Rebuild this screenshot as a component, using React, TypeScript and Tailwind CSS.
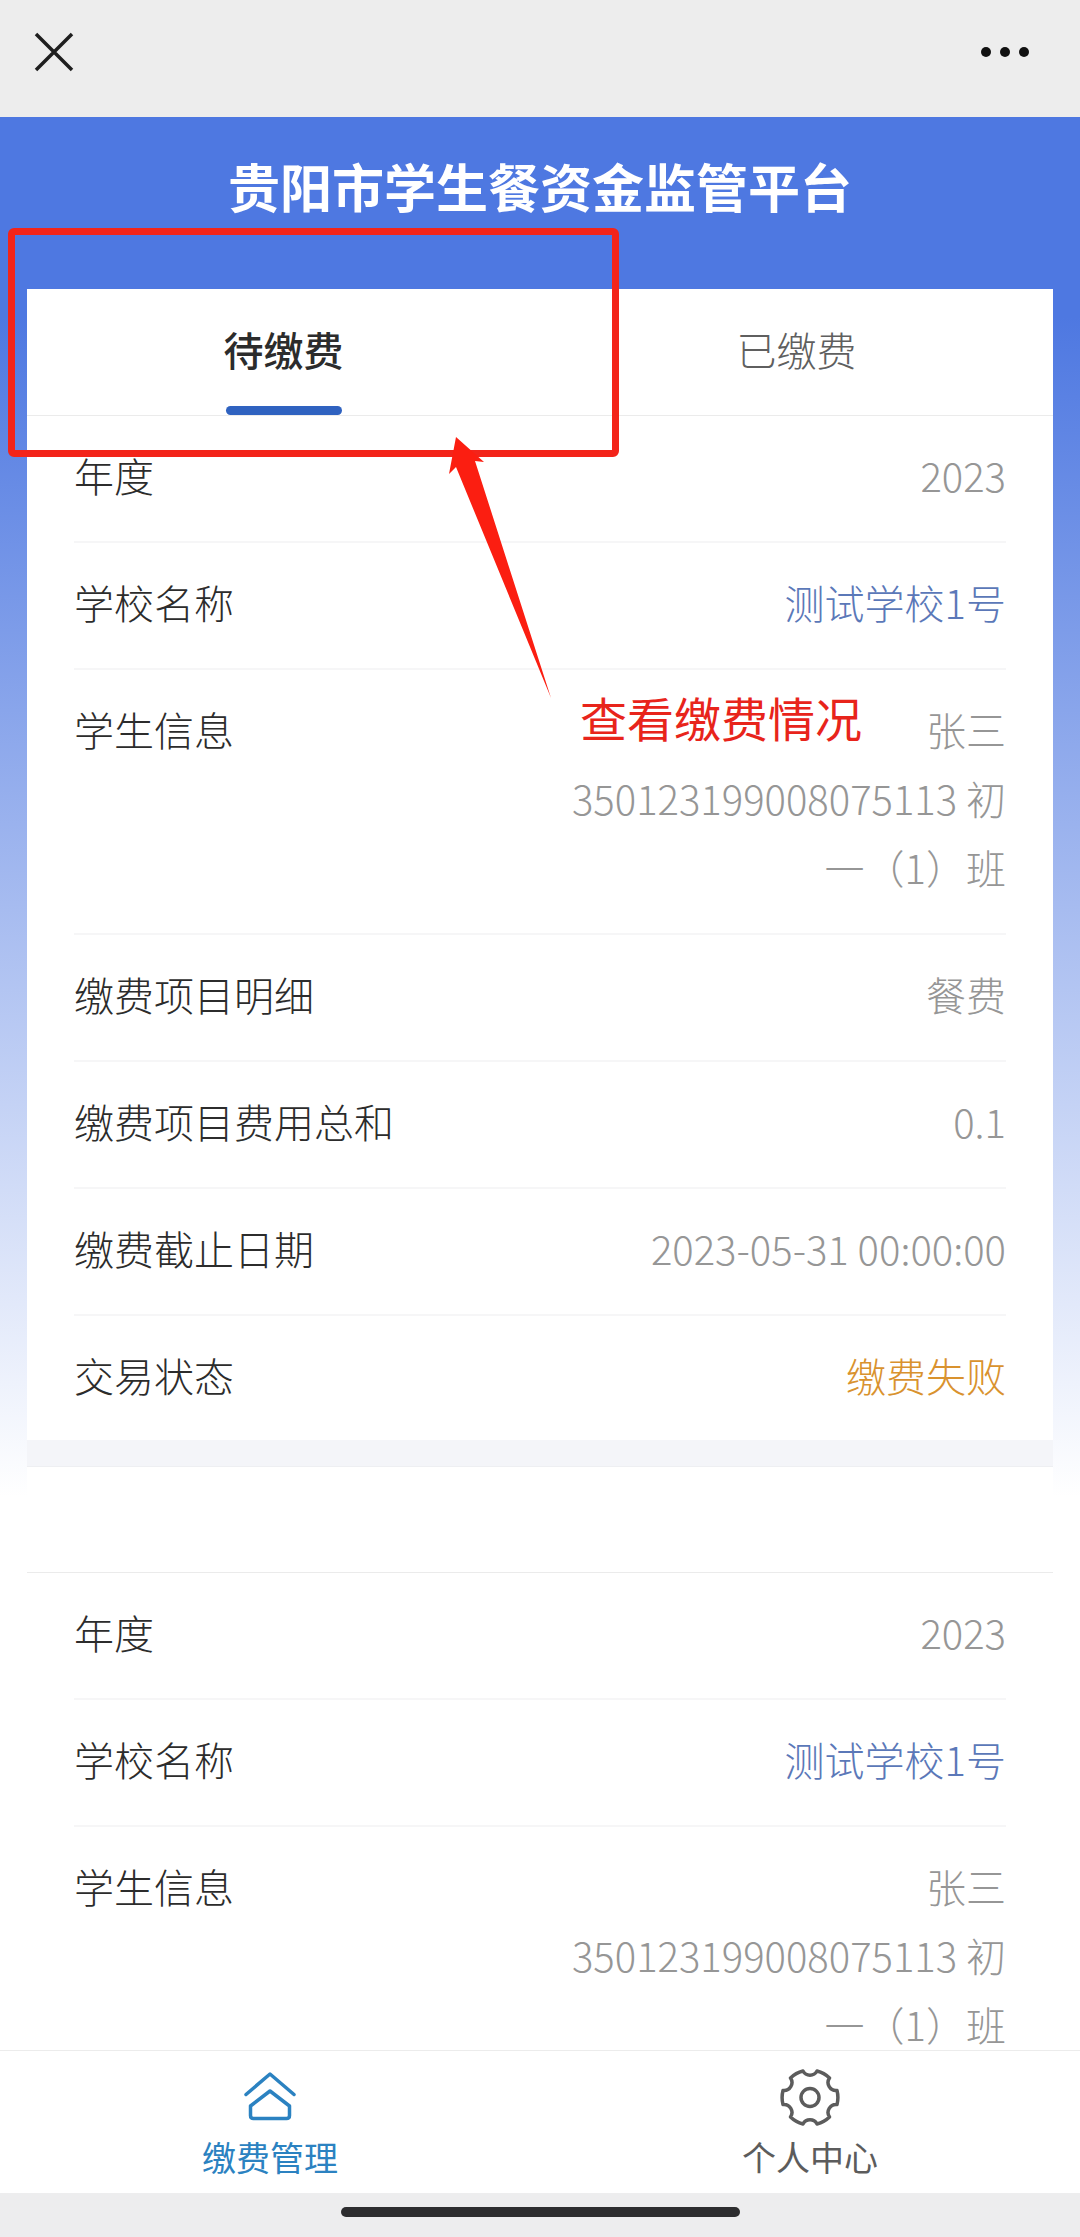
import React, { useState } from "react";

type Field = {
  label: string;
  value: string;
  href?: string;
  color?: string;
};

const tabs = ["待缴费", "已缴费"];

const firstBill: Field[] = [
  { label: "年度", value: "2023" },
  { label: "学校名称", value: "测试学校1号", href: "#school" },
  { label: "学生信息", value: "张三 350123199008075113 初一（1）班" },
  { label: "缴费项目明细", value: "餐费" },
  { label: "缴费项目费用总和", value: "0.1" },
  { label: "缴费截止日期", value: "2023-05-31 00:00:00" },
  { label: "交易状态", value: "缴费失败", color: "text-[#d9922e]" },
];

const secondBill: Field[] = firstBill.slice(0, 3);

const BillFields = ({ fields }: { fields: Field[] }) => {
  return (
    <dl className="px-[47px] text-[40px] leading-[69px] font-light">
      {fields.map((field) => (
        <div
          key={field.label}
          className="flex justify-between pt-[25px] pb-[31px] border-b-2 border-[#f6f6f7] last:border-b-0 last:pb-[30px]"
        >
          <dt className="text-[#2c2c2c]">{field.label}</dt>
          <dd className={`w-1/2 text-right ${field.color ?? "text-[#969696]"}`}>
            {field.href ? (
              <a href={field.href} className="text-[#5b78b8]">
                {field.value}
              </a>
            ) : (
              field.value
            )}
          </dd>
        </div>
      ))}
    </dl>
  );
};

const HomeIcon = () => (
  <svg
    className="w-[60px] h-[60px]"
    viewBox="0 0 60 60"
    fill="none"
    stroke="currentColor"
    strokeWidth="3.5"
    strokeLinecap="round"
    strokeLinejoin="round"
    aria-hidden="true"
  >
    <path d="M6 27.500 30 7 54 27.500" />
    <path d="M30 24 49.500 39V48.500q0 3-3 3h-33q-3 0-3-3v-9.500Z" />
  </svg>
);

const GearIcon = () => (
  <svg
    className="w-[60px] h-[60px]"
    viewBox="0 0 60 60"
    fill="none"
    stroke="currentColor"
    strokeWidth="3.5"
    strokeLinejoin="round"
    aria-hidden="true"
  >
    <path d="M23 4A8 8 0 0 0 37 4A28 28 0 0 1 49.500 11A8 8 0 0 0 57 23.500A28 28 0 0 1 57 37.500A8 8 0 0 0 49.500 50A28 28 0 0 1 37 57A8 8 0 0 0 23 57A28 28 0 0 1 10.500 50A8 8 0 0 0 3 37.500A28 28 0 0 1 3 23.500A8 8 0 0 0 10.500 11A28 28 0 0 1 23 4Z" />
    <circle cx="30" cy="30.500" r="9" />
  </svg>
);

// Red hint drawn over the page: frame, arrow and caption
const Guide = () => (
  <div className="pointer-events-none">
    <div className="absolute left-2 top-[111px] w-[611px] h-[229px] border-[7px] border-[#f3241a] rounded-md" />
    <svg
      className="absolute left-[448px] top-[319px] w-[104px] h-[264px]"
      viewBox="0 0 104 264"
      aria-hidden="true"
    >
      <path d="M8 1 36 26 27 25 103 262 8 31 1 38Z" fill="#fb1e11" />
    </svg>
    <p className="absolute left-[580px] top-[576px] text-[47px] leading-[48px] text-[#e8241b] whitespace-nowrap">
      查看缴费情况
    </p>
  </div>
);

const App = () => {
  const [active, setActive] = useState(0);

  return (
    <div className="flex flex-col h-screen bg-white font-['Noto_Sans_CJK_SC',sans-serif]">
      {/* Browser bar */}
      <header className="flex items-center justify-between shrink-0 h-[117px] pl-[34px] pr-[51px] pb-[13px] bg-[#ededed] text-[#1f1f1f]">
        <button aria-label="关闭">
          <svg className="w-10 h-10" viewBox="0 0 40 40" fill="none" stroke="currentColor" strokeWidth="3.5">
            <path d="M2 2 38 38M38 2 2 38" />
          </svg>
        </button>
        <button aria-label="更多" className="flex gap-[9px]">
          <span className="w-[10px] h-[10px] rounded-full bg-[#111]" />
          <span className="w-[10px] h-[10px] rounded-full bg-[#111]" />
          <span className="w-[10px] h-[10px] rounded-full bg-[#111]" />
        </button>
      </header>

      {/* Page content */}
      <main className="flex-1 min-h-0 overflow-y-auto [scrollbar-width:none]">
        <div className="relative px-[27px] bg-[linear-gradient(to_bottom,#4e78e1_0,#4e78e1_200px,#fff_1380px)]">
          <h1 className="pt-[33px] pb-[67px] text-center text-[52px] leading-[72px] font-bold text-white">
            贵阳市学生餐资金监管平台
          </h1>

          <section className="bg-white">
            <div role="tablist" className="flex h-[127px] border-b border-[#ebebeb]">
              {tabs.map((tab, index) => (
                <button
                  key={tab}
                  role="tab"
                  aria-selected={active === index}
                  onClick={() => setActive(index)}
                  className="flex flex-1 flex-col items-center"
                >
                  <span
                    className={
                      active === index
                        ? "pt-[26px] text-[40px] leading-[69px] font-medium text-[#2c2c2c]"
                        : "pt-[26px] text-[40px] leading-[69px] font-light text-[#5f5f5f]"
                    }
                  >
                    {tab}
                  </span>
                  {active === index && (
                    <span className="mt-auto w-[116px] h-[9px] rounded-full bg-[#2f62c0]" />
                  )}
                </button>
              ))}
            </div>
            <BillFields fields={firstBill} />
          </section>

          <div className="h-[27px] bg-[#f4f5f9] border-b border-[#eeeff2]" />

          <section className="bg-white">
            <div className="h-[106px] border-b border-[#ebebeb]" />
            <BillFields fields={secondBill} />
          </section>

          <Guide />
        </div>
      </main>

      {/* Bottom navigation */}
      <nav className="flex shrink-0 border-t border-[#ececec] bg-white text-[34px] leading-10">
        <a href="#pay" className="flex flex-1 flex-col items-center gap-[10px] pt-4 pb-4 text-[#2b82c1]">
          <HomeIcon />
          缴费管理
        </a>
        <a href="#me" className="flex flex-1 flex-col items-center gap-[10px] pt-4 pb-4 text-[#5c5c5c]">
          <GearIcon />
          个人中心
        </a>
      </nav>

      <footer className="flex justify-center shrink-0 h-11 pt-[14px] bg-[#ededee]">
        <div className="w-[399px] h-[10px] rounded-full bg-[#2d2d2f]" />
      </footer>
    </div>
  );
};

export default App;
